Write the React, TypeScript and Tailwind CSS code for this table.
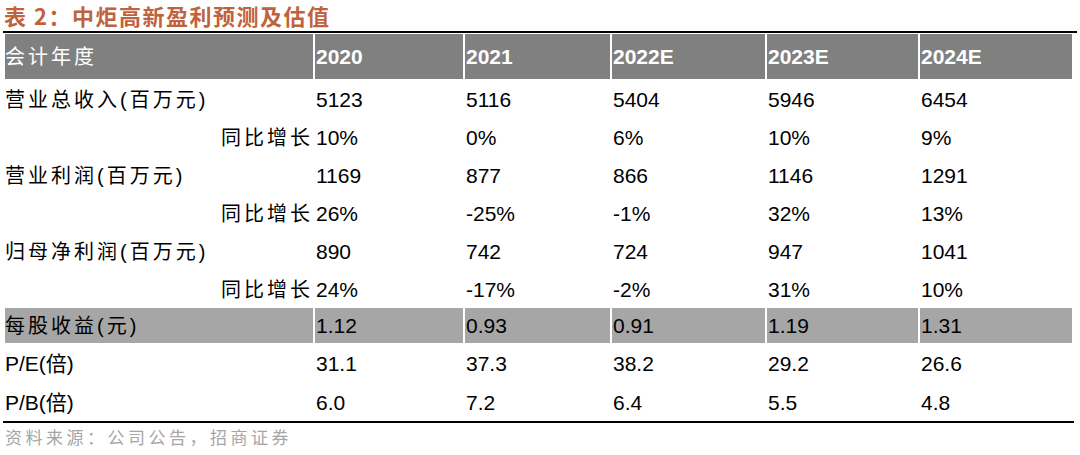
const rows = [
  { label: "营业总收入(百万元)", sub: false, v: ["5123", "5116", "5404", "5946", "6454"] },
  { label: "同比增长", sub: true, v: ["10%", "0%", "6%", "10%", "9%"] },
  { label: "营业利润(百万元)", sub: false, v: ["1169", "877", "866", "1146", "1291"] },
  { label: "同比增长", sub: true, v: ["26%", "-25%", "-1%", "32%", "13%"] },
  { label: "归母净利润(百万元)", sub: false, v: ["890", "742", "724", "947", "1041"] },
  { label: "同比增长", sub: true, v: ["24%", "-17%", "-2%", "31%", "10%"] },
];

const years = ["2020", "2021", "2022E", "2023E", "2024E"];

// 列宽：首列 + 5 个年份列
const cols = "grid grid-cols-[308px_148px_145px_153px_151px_152px] gap-x-[2px] mx-[5px]";

export default function App() {
  return (
    <div className="w-[1080px] h-[455px] bg-white overflow-hidden font-['Liberation_Sans','Noto_Sans_CJK_SC',sans-serif] text-black">
      {/* 标题 */}
      <div className="h-[31px] flex items-center pl-[4px] text-[22px] tracking-[1.5px] font-bold text-[#c0623c] font-['Noto_Sans_CJK_SC',sans-serif]">
        表 2：中炬高新盈利预测及估值
      </div>
      <div className="mx-[3px] border-t-2 border-black" />

      {/* 表头 */}
      <div className={`${cols} mt-[1px] h-[45px]`}>
        <div className="bg-[#808080] flex items-center text-white text-[20px] tracking-[3px]">会计年度</div>
        {years.map((y) => (
          <div key={y} className="bg-[#808080] flex items-center pl-[1px] text-white text-[21px] font-bold">
            {y}
          </div>
        ))}
      </div>

      {/* 数据行 */}
      {rows.map((r, i) => (
        <div key={i} className={`${cols} h-[38px] items-center pt-[3px]`}>
          <div className={`text-[20px] tracking-[3px] ${r.sub ? "text-right" : "text-left"}`}>
            {r.label}
          </div>
          {r.v.map((x, j) => (
            <div key={j} className="pl-[1px] text-[21px]">
              {x}
            </div>
          ))}
        </div>
      ))}

      {/* 每股收益 */}
      <div className={`${cols} mt-[1px] h-[35px]`}>
        <div className="bg-[#a6a6a6] flex items-center text-[20px] tracking-[3px]">每股收益(元)</div>
        {["1.12", "0.93", "0.91", "1.19", "1.31"].map((x) => (
          <div key={x} className="bg-[#a6a6a6] flex items-center pl-[1px] text-[21px]">
            {x}
          </div>
        ))}
      </div>

      {[
        { label: "P/E(倍)", v: ["31.1", "37.3", "38.2", "29.2", "26.6"] },
        { label: "P/B(倍)", v: ["6.0", "7.2", "6.4", "5.5", "4.8"] },
      ].map((r) => (
        <div key={r.label} className={`${cols} h-[39px] items-center pt-[3px]`}>
          <div className="text-[21px]">{r.label}</div>
          {r.v.map((x, j) => (
            <div key={j} className="pl-[1px] text-[21px]">
              {x}
            </div>
          ))}
        </div>
      ))}

      <div className="mx-[3px] w-[1071px] border-t-2 border-black" />

      {/* 资料来源 */}
      <div className="mt-[4px] pl-[5px] text-[17px] leading-[20px] tracking-[3.5px] text-[#a6a6a6] font-['Noto_Sans_CJK_SC',sans-serif]">
        资料来源：公司公告，招商证券
      </div>
    </div>
  );
}
